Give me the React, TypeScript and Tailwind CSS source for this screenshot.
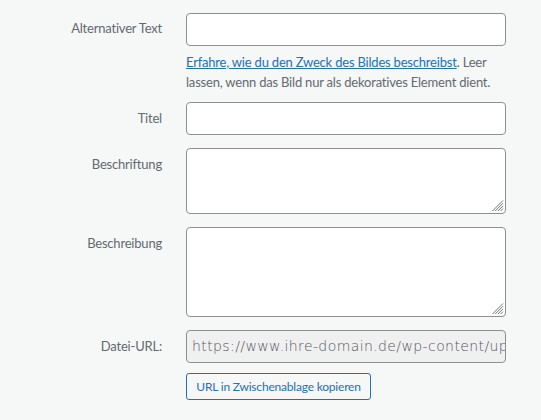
export default function App() {
  const font = { fontFamily: 'Lato, "Noto Sans", sans-serif' };
  const inputCls = 'w-[320px] rounded-[4px] border border-[#8c8f94] bg-white';
  const labelCls = 'w-[162px] shrink-0 text-right text-[13px] leading-5 tracking-[-0.2px] text-[#646970]';

  const Grip = () => (
    <svg className="absolute bottom-[1px] right-[1px]" width="13" height="13" viewBox="0 0 13 13">
      <path d="M12 1.5 L1.5 12 M12 4.2 L4.2 12 M12 6.9 L6.9 12 M12 9.6 L9.6 12" stroke="#5f6368" strokeWidth="0.9" fill="none" />
    </svg>
  );

  return (
    <div className="h-[420px] w-[541px] bg-[#f6f7f7]" style={font}>
      <div className="pt-[13px]">
        {/* Alternativer Text */}
        <div className="flex gap-6">
          <label className={labelCls + ' pt-[5px]'}>Alternativer Text</label>
          <div>
            <div className={inputCls + ' h-[33px]'} />
            <p className="mt-[6px] w-[320px] text-[13px] leading-5 tracking-[-0.2px] text-[#646970]">
              <a className="text-[#2271b1] underline">Erfahre, wie du den Zweck des Bildes beschreibst</a>. Leer lassen, wenn das Bild nur als dekoratives Element dient.
            </p>
          </div>
        </div>

        {/* Titel */}
        <div className="mt-[10px] flex gap-6">
          <label className={labelCls + ' pt-[6px]'}>Titel</label>
          <div className={inputCls + ' h-[33px]'} />
        </div>

        {/* Beschriftung */}
        <div className="mt-[13px] flex gap-6">
          <label className={labelCls + ' pt-[6px]'}>Beschriftung</label>
          <div className={inputCls + ' relative h-[66px]'}>
            <Grip />
          </div>
        </div>

        {/* Beschreibung */}
        <div className="mt-[13px] flex gap-6">
          <label className={labelCls + ' pt-[6px]'}>Beschreibung</label>
          <div className={inputCls + ' relative h-[90px]'}>
            <Grip />
          </div>
        </div>

        {/* Datei-URL */}
        <div className="mt-[13px] flex gap-6">
          <label className={labelCls + ' pt-[6px]'}>Datei-URL:</label>
          <div>
            <div className="h-[33px] w-[320px] overflow-hidden whitespace-nowrap rounded-[4px] border border-[#8c8f94] bg-[#f0f0f1] pl-[5px] text-[14px] font-extralight leading-[31px] tracking-[0.4px] text-[#50575e]" style={{ fontFamily: '"DejaVu Sans", sans-serif' }}>
              https://www.ihre-domain.de/wp-content/uploads
            </div>
            <button className="mt-[10px] h-[27px] w-[185px] rounded-[3px] border border-[#2271b1] bg-[#f6f7f7] px-0 text-[12px] leading-[25px] tracking-[-0.2px] text-[#2271b1]">
              URL in Zwischenablage kopieren
            </button>
          </div>
        </div>
      </div>
    </div>
  );
}
